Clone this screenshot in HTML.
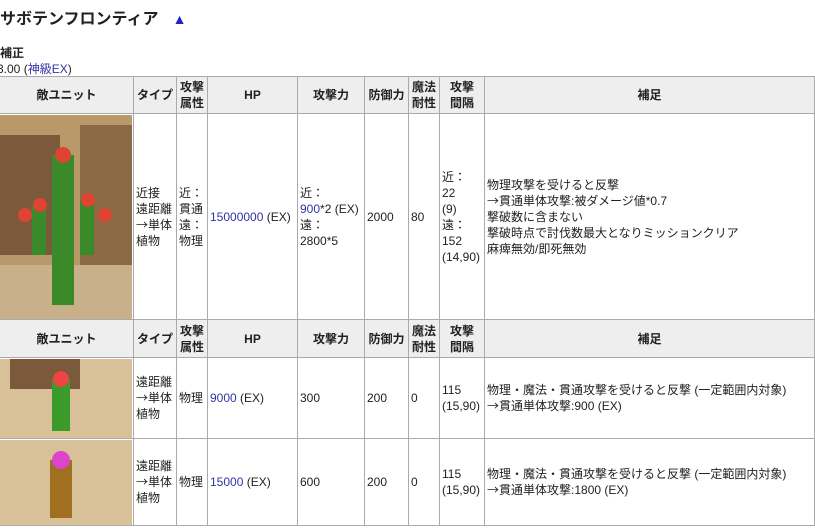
<!DOCTYPE html>
<html><head><meta charset="utf-8"><style>
body{margin:0;background:#fff;font-family:"Liberation Sans","Noto Sans CJK JP",sans-serif;color:#222;font-size:12px;overflow:hidden;width:815px;height:530px;position:relative}
h2{position:absolute;left:0;top:5px;margin:0;font-size:16px;font-weight:bold;color:#222}
h2 span{color:#22c;font-size:14px;margin-left:14px}
.lbl{position:absolute;left:0;top:44px;font-weight:bold;font-size:12px}
.val{position:absolute;left:-3px;top:60px;font-size:12px}
a{color:#33a;text-decoration:none}
table{position:absolute;left:-1px;top:76px;border-collapse:collapse;table-layout:fixed;width:815px}
td,th{border:1px solid #aaa;padding:1px 2px;line-height:16px;vertical-align:middle;text-align:left;font-size:12px}
th{background:#eee;text-align:center;font-weight:bold;line-height:16px}
.img{padding:0}
.b{color:#33a}
.ar{font-family:"Noto Sans CJK JP",sans-serif;line-height:14px}
</style></head><body>
<h2>サボテンフロンティア<span>▲</span></h2>
<div class="lbl">補正</div>
<div class="val">3.00 (<a>神級EX</a>)</div>
<table>
<colgroup><col style="width:134px"><col style="width:43px"><col style="width:31px"><col style="width:90px"><col style="width:67px"><col style="width:44px"><col style="width:31px"><col style="width:45px"><col style="width:330px"></colgroup>
<tr style="height:37px"><th>敵ユニット</th><th>タイプ</th><th>攻撃<br>属性</th><th>HP</th><th>攻撃力</th><th>防御力</th><th>魔法<br>耐性</th><th>攻撃<br>間隔</th><th>補足</th></tr>
<tr style="height:206px"><td class="img"><svg width="132" height="204" style="display:block"><rect width="132" height="204" fill="#b89a6a"/><rect x="0" y="20" width="60" height="120" fill="#7a5a3a"/><rect x="80" y="10" width="52" height="150" fill="#8a6a44"/><rect x="0" y="150" width="132" height="54" fill="#c8b08a"/><rect x="52" y="40" width="22" height="150" fill="#3a8a2a"/><rect x="32" y="90" width="14" height="50" fill="#3a8a2a"/><rect x="80" y="85" width="14" height="55" fill="#3a8a2a"/><circle cx="63" cy="40" r="8" fill="#d43"/><circle cx="40" cy="90" r="7" fill="#d43"/><circle cx="88" cy="85" r="7" fill="#d43"/><circle cx="105" cy="100" r="7" fill="#d43"/><circle cx="25" cy="100" r="7" fill="#d43"/></svg></td>
<td>近接<br>遠距離<br><span class="ar">→</span>単体<br>植物</td><td>近：<br>貫通<br>遠：<br>物理</td><td><span class="b">15000000</span> (EX)</td><td>近：<br><span class="b">900</span>*2 (EX)<br>遠：<br>2800*5</td><td>2000</td><td>80</td><td>近：<br>22<br>(9)<br>遠：<br>152<br>(14,90)</td><td>物理攻撃を受けると反撃<br><span class="ar">→</span>貫通単体攻撃:被ダメージ値*0.7<br>撃破数に含まない<br>撃破時点で討伐数最大となりミッションクリア<br>麻痺無効/即死無効</td></tr>
<tr style="height:38px"><th>敵ユニット</th><th>タイプ</th><th>攻撃<br>属性</th><th>HP</th><th>攻撃力</th><th>防御力</th><th>魔法<br>耐性</th><th>攻撃<br>間隔</th><th>補足</th></tr>
<tr style="height:81px"><td class="img"><svg width="132" height="79" style="display:block"><rect width="132" height="79" fill="#d8c098"/><rect x="10" y="0" width="70" height="30" fill="#7a5a3a"/><rect x="52" y="20" width="18" height="52" fill="#3a9a2a"/><circle cx="61" cy="20" r="8" fill="#e44"/></svg></td>
<td>遠距離<br><span class="ar">→</span>単体<br>植物</td><td>物理</td><td><span class="b">9000</span> (EX)</td><td>300</td><td>200</td><td>0</td><td>115<br>(15,90)</td><td>物理・魔法・貫通攻撃を受けると反撃 (一定範囲内対象)<br><span class="ar">→</span>貫通単体攻撃:900 (EX)</td></tr>
<tr style="height:87px"><td class="img"><svg width="132" height="85" style="display:block"><rect width="132" height="85" fill="#d8c098"/><rect x="50" y="20" width="22" height="58" fill="#a07020"/><circle cx="61" cy="20" r="9" fill="#d4c"/></svg></td>
<td>遠距離<br><span class="ar">→</span>単体<br>植物</td><td>物理</td><td><span class="b">15000</span> (EX)</td><td>600</td><td>200</td><td>0</td><td>115<br>(15,90)</td><td>物理・魔法・貫通攻撃を受けると反撃 (一定範囲内対象)<br><span class="ar">→</span>貫通単体攻撃:1800 (EX)</td></tr>
</table>
</body></html>
